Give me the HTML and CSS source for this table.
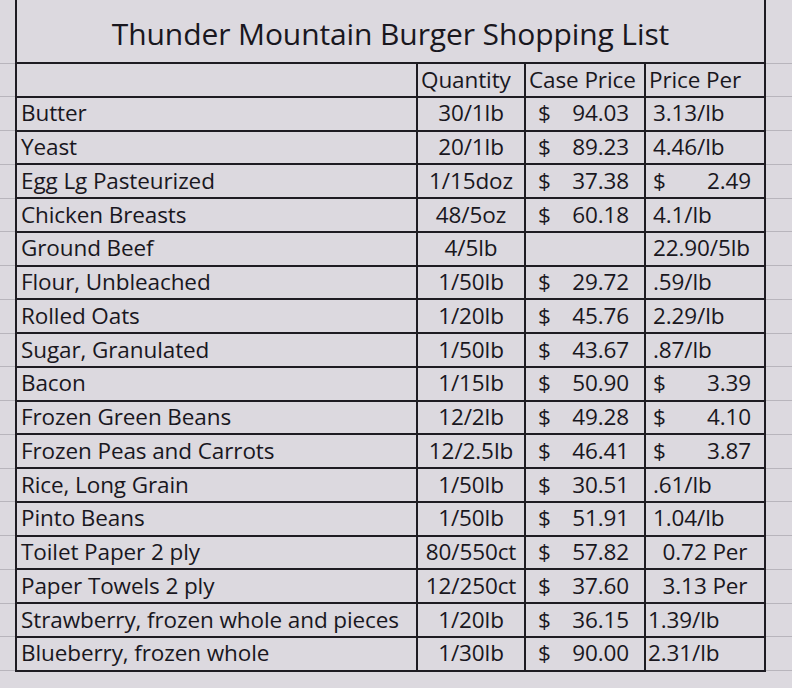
FILE: index.html
```html
<!DOCTYPE html>
<html lang="en">
<head>
<meta charset="utf-8">
<title>Thunder Mountain Burger Shopping List</title>
<link rel="stylesheet" href="styles.css">
</head>
<body>
<table class="sheet">
  <colgroup>
    <col class="col-gutter-l">
    <col class="col-name">
    <col class="col-qty">
    <col class="col-case">
    <col class="col-per">
    <col class="col-gutter-r">
  </colgroup>
  <tr class="title-row">
    <td class="gutter"></td>
    <td class="title" colspan="4">Thunder Mountain Burger Shopping List</td>
    <td class="gutter"></td>
  </tr>
  <tr class="row head">
    <td class="gutter"></td>
    <td class="cell name"></td>
    <td class="cell hd">Quantity</td>
    <td class="cell hd">Case Price</td>
    <td class="cell hd">Price Per</td>
    <td class="gutter"></td>
  </tr>
  <tr class="row">
    <td class="gutter"></td>
    <td class="cell name">Butter</td>
    <td class="cell qty">30/1lb</td>
    <td class="cell money"><div class="acct"><span>$</span><span>94.03</span></div></td>
    <td class="cell per">3.13/lb</td>
    <td class="gutter"></td>
  </tr>
  <tr class="row">
    <td class="gutter"></td>
    <td class="cell name">Yeast</td>
    <td class="cell qty">20/1lb</td>
    <td class="cell money"><div class="acct"><span>$</span><span>89.23</span></div></td>
    <td class="cell per">4.46/lb</td>
    <td class="gutter"></td>
  </tr>
  <tr class="row">
    <td class="gutter"></td>
    <td class="cell name">Egg Lg Pasteurized</td>
    <td class="cell qty">1/15doz</td>
    <td class="cell money"><div class="acct"><span>$</span><span>37.38</span></div></td>
    <td class="cell per"><div class="acct per-acct"><span>$</span><span>2.49</span></div></td>
    <td class="gutter"></td>
  </tr>
  <tr class="row">
    <td class="gutter"></td>
    <td class="cell name">Chicken Breasts</td>
    <td class="cell qty">48/5oz</td>
    <td class="cell money"><div class="acct"><span>$</span><span>60.18</span></div></td>
    <td class="cell per">4.1/lb</td>
    <td class="gutter"></td>
  </tr>
  <tr class="row">
    <td class="gutter"></td>
    <td class="cell name">Ground Beef</td>
    <td class="cell qty">4/5lb</td>
    <td class="cell money"></td>
    <td class="cell per right">22.90/5lb</td>
    <td class="gutter"></td>
  </tr>
  <tr class="row">
    <td class="gutter"></td>
    <td class="cell name">Flour, Unbleached</td>
    <td class="cell qty">1/50lb</td>
    <td class="cell money"><div class="acct"><span>$</span><span>29.72</span></div></td>
    <td class="cell per">.59/lb</td>
    <td class="gutter"></td>
  </tr>
  <tr class="row">
    <td class="gutter"></td>
    <td class="cell name">Rolled Oats</td>
    <td class="cell qty">1/20lb</td>
    <td class="cell money"><div class="acct"><span>$</span><span>45.76</span></div></td>
    <td class="cell per">2.29/lb</td>
    <td class="gutter"></td>
  </tr>
  <tr class="row">
    <td class="gutter"></td>
    <td class="cell name">Sugar, Granulated</td>
    <td class="cell qty">1/50lb</td>
    <td class="cell money"><div class="acct"><span>$</span><span>43.67</span></div></td>
    <td class="cell per">.87/lb</td>
    <td class="gutter"></td>
  </tr>
  <tr class="row">
    <td class="gutter"></td>
    <td class="cell name">Bacon</td>
    <td class="cell qty">1/15lb</td>
    <td class="cell money"><div class="acct"><span>$</span><span>50.90</span></div></td>
    <td class="cell per"><div class="acct per-acct"><span>$</span><span>3.39</span></div></td>
    <td class="gutter"></td>
  </tr>
  <tr class="row">
    <td class="gutter"></td>
    <td class="cell name">Frozen Green Beans</td>
    <td class="cell qty">12/2lb</td>
    <td class="cell money"><div class="acct"><span>$</span><span>49.28</span></div></td>
    <td class="cell per"><div class="acct per-acct"><span>$</span><span>4.10</span></div></td>
    <td class="gutter"></td>
  </tr>
  <tr class="row">
    <td class="gutter"></td>
    <td class="cell name">Frozen Peas and Carrots</td>
    <td class="cell qty">12/2.5lb</td>
    <td class="cell money"><div class="acct"><span>$</span><span>46.41</span></div></td>
    <td class="cell per"><div class="acct per-acct"><span>$</span><span>3.87</span></div></td>
    <td class="gutter"></td>
  </tr>
  <tr class="row">
    <td class="gutter"></td>
    <td class="cell name">Rice, Long Grain</td>
    <td class="cell qty">1/50lb</td>
    <td class="cell money"><div class="acct"><span>$</span><span>30.51</span></div></td>
    <td class="cell per">.61/lb</td>
    <td class="gutter"></td>
  </tr>
  <tr class="row">
    <td class="gutter"></td>
    <td class="cell name">Pinto Beans</td>
    <td class="cell qty">1/50lb</td>
    <td class="cell money"><div class="acct"><span>$</span><span>51.91</span></div></td>
    <td class="cell per">1.04/lb</td>
    <td class="gutter"></td>
  </tr>
  <tr class="row">
    <td class="gutter"></td>
    <td class="cell name">Toilet Paper 2 ply</td>
    <td class="cell qty">80/550ct</td>
    <td class="cell money"><div class="acct"><span>$</span><span>57.82</span></div></td>
    <td class="cell per center">0.72 Per</td>
    <td class="gutter"></td>
  </tr>
  <tr class="row">
    <td class="gutter"></td>
    <td class="cell name">Paper Towels 2 ply</td>
    <td class="cell qty">12/250ct</td>
    <td class="cell money"><div class="acct"><span>$</span><span>37.60</span></div></td>
    <td class="cell per center">3.13 Per</td>
    <td class="gutter"></td>
  </tr>
  <tr class="row">
    <td class="gutter"></td>
    <td class="cell name">Strawberry, frozen whole and pieces</td>
    <td class="cell qty">1/20lb</td>
    <td class="cell money"><div class="acct"><span>$</span><span>36.15</span></div></td>
    <td class="cell per flush">1.39/lb</td>
    <td class="gutter"></td>
  </tr>
  <tr class="row">
    <td class="gutter"></td>
    <td class="cell name">Blueberry, frozen whole</td>
    <td class="cell qty">1/30lb</td>
    <td class="cell money"><div class="acct"><span>$</span><span>90.00</span></div></td>
    <td class="cell per flush">2.31/lb</td>
    <td class="gutter"></td>
  </tr>
  <tr class="row tail">
    <td class="gutter"></td>
    <td class="gutter"></td>
    <td class="gutter"></td>
    <td class="gutter"></td>
    <td class="gutter"></td>
    <td class="gutter"></td>
  </tr>
</table>
</body>
</html>
```
FILE: styles.css
```css
html, body {
  margin: 0;
  padding: 0;
  background: #dcd9df;
}

body {
  font-family: "Open Sans", "Liberation Sans", sans-serif;
  color: #19171e;
  overflow: hidden;
}

.sheet {
  border-collapse: collapse;
  table-layout: fixed;
  width: 792px;
}

.col-gutter-l { width: 16px; }
.col-name { width: 401px; }
.col-qty { width: 108px; }
.col-case { width: 120px; }
.col-per { width: 120px; }
.col-gutter-r { width: 27px; }

.sheet td {
  padding: 0;
  white-space: nowrap;
  overflow: hidden;
  line-height: 1;
  font-size: 22.5px;
  font-weight: 500;
  letter-spacing: -0.1px;
}

.gutter {
  border-bottom: 1px solid #b8b5bc;
}

.title-row {
  height: 63px;
}

.title {
  border-left: 2px solid #1e1c22;
  border-right: 2px solid #1e1c22;
  border-bottom: 2px solid #1e1c22;
  text-align: center;
  vertical-align: bottom;
  padding-bottom: 13px !important;
  font-size: 30px !important;
}

.row {
  height: 33.75px;
}

.tail {
  height: 20px;
}

.cell {
  border: 2px solid #1e1c22;
  vertical-align: middle;
}

.name {
  padding-left: 4px !important;
}

.hd {
  padding-left: 3px !important;
}

.qty {
  text-align: center;
}

.acct {
  display: flex;
  justify-content: space-between;
  padding: 0 15px 0 12px;
}

.per {
  padding-left: 7px !important;
}

.per-acct {
  padding: 0 13px 0 0;
}

.per.right {
  text-align: right;
  padding-right: 15px !important;
}

.per.center {
  text-align: center;
  padding-left: 0 !important;
}

.per.flush {
  padding-left: 2px !important;
}
```
